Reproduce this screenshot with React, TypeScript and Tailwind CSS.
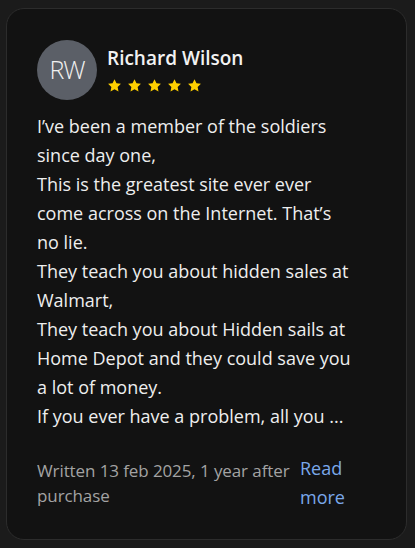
import React from "react";

const Star = () => (
  <svg width="15" height="15" viewBox="0 0 24 24" className="shrink-0">
    <path d="M12 1.8l3.1 6.6 7.2.9-5.3 5 1.4 7.1L12 17.9l-6.4 3.5 1.4-7.1-5.3-5 7.2-.9z" fill="#ffd000" />
  </svg>
);

const lines = [
  "I\u2019ve been a member of the soldiers",
  "since day one,",
  "This is the greatest site ever ever",
  "come across on the Internet. That\u2019s",
  "no lie.",
  "They teach you about hidden sales at",
  "Walmart,",
  "They teach you about Hidden sails at",
  "Home Depot and they could save you",
  "a lot of money.",
  "If you ever have a problem, all you ...",
];

export default function App() {
  return (
    <div
      className="w-[415px] h-[548px] bg-[#1b1b1b] p-[8px] pl-[6px] pr-[8px]"
      style={{ fontFamily: '"Open Sans", "Noto Sans", sans-serif' }}
    >
      <div className="h-[532px] rounded-[18px] border border-[#2c2c2c] bg-[#121212] pt-[31px] pl-[30px] pr-[20px]">
        <div className="flex items-center gap-[10px]">
          <div className="w-[60px] h-[60px] rounded-full bg-[#5b5f67] flex items-center justify-center text-[#f0f0f0] text-[25px] font-light tracking-[-1px]">
            RW
          </div>
          <div className="flex flex-col gap-[8px] -mt-[1px]">
            <div className="text-[19px] font-semibold text-[#f2f2f2] leading-[24px]">Richard Wilson</div>
            <div className="flex gap-[5px]">
              <Star />
              <Star />
              <Star />
              <Star />
              <Star />
            </div>
          </div>
        </div>
        <div className="mt-[12px] text-[18px] leading-[29px] text-[#eeeeee]">
          {lines.map((l, i) => (
            <div key={i} className="whitespace-nowrap">{l}</div>
          ))}
        </div>
        <div className="mt-[27px] flex items-start gap-[5px]">
          <div className="w-[258px] text-[17px] leading-[25px] text-[#a3a3a3] tracking-[-0.1px]">
            Written 13 feb 2025, 1 year after purchase
          </div>
          <div className="w-[52px] text-[18px] leading-[29px] text-[#7aa8ea] -mt-[4px]">Read more</div>
        </div>
      </div>
    </div>
  );
}
